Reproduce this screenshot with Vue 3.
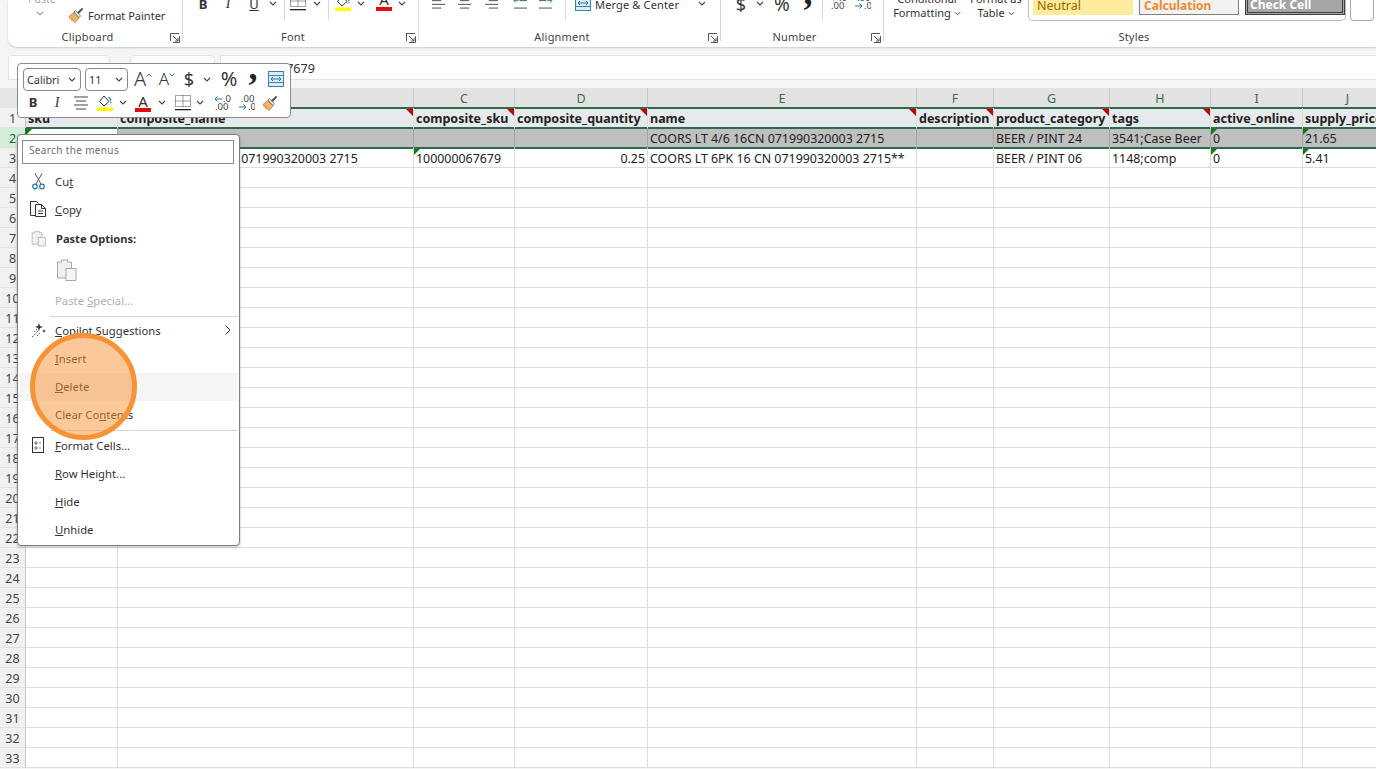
<script setup>
const cols = [
  { l: 'A', w: 92 }, { l: 'B', w: 296 }, { l: 'C', w: 101 }, { l: 'D', w: 133 }, { l: 'E', w: 269 },
  { l: 'F', w: 77 }, { l: 'G', w: 116 }, { l: 'H', w: 101 }, { l: 'I', w: 92 }, { l: 'J', w: 90 }
]
const gridCols = '26px ' + cols.map(c => c.w + 'px').join(' ')
const data = {
  1: ['sku', 'composite_name', 'composite_sku', 'composite_quantity', 'name', 'description', 'product_category', 'tags', 'active_online', 'supply_price'],
  2: ['', '', '', '', 'COORS LT 4/6 16CN 071990320003 2715', '', 'BEER / PINT 24', '3541;Case Beer', '0', '21.65'],
  3: ['', 'COORS LT 6PK 16CN 071990320003 2715', '100000067679', '0.25', 'COORS LT 6PK 16 CN 071990320003 2715**', '', 'BEER / PINT 06', '1148;comp', '0', '5.41']
}
const rows = Array.from({ length: 33 }, (_, i) => i + 1)
const cell = (r, c) => (data[r] ? data[r][c] : '')
const redMark = (r, c) => r === 1 && c >= 1 && c <= 7
const greenMark = (r, c) => (r === 2 && (c === 0 || c === 8 || c === 9)) || (r === 3 && (c === 2 || c === 8 || c === 9))
</script>

<template>
  <div class="page">
    <svg class="defs" aria-hidden="true">
      <symbol id="chev" viewBox="0 0 8 5"><path d="M1 1l3 3 3-3" fill="none" stroke="#444" stroke-width="1.1" /></symbol>
      <symbol id="launch" viewBox="0 0 10 10"><path d="M.5 8V.5H9M9.5 3v6.500H3M3 3l5 5M5 8h3V5" fill="none" stroke="#555" /></symbol>
      <symbol id="painter" viewBox="0 0 16 16">
        <path d="M1 9.500L6 5.500 11 11 7 15.500 5.500 14 5 13 3.500 13.500 4 11.500 2.500 12Z" fill="#f2b06a" stroke="#c9782b" stroke-width=".8" />
        <path d="M6 5l1.500-1.500L12.500 9 11 10.500Z" fill="#fff" stroke="#555" stroke-width=".8" />
        <path d="M9 5.500L14 .8 15.300 2 10.800 7Z" fill="#555" />
      </symbol>
      <symbol id="fill" viewBox="0 0 16 16">
        <path d="M7 1l5 5.500L7 11 2.500 6.500Z" fill="#fff" stroke="#333" />
        <path d="M11 2.500c2 .5 2.800 2 2.800 3.500" fill="none" stroke="#1f78b4" stroke-width="1.200" />
        <path d="M13.800 6.500l-1 1.800h2Z" fill="#1f78b4" />
        <rect x="0" y="12.500" width="16" height="3.500" fill="#ffff00" />
      </symbol>
      <symbol id="borders" viewBox="0 0 16 16">
        <path d="M.5.500h15v11H.5ZM8 .5v11M.5 6h15" fill="none" stroke="#444" stroke-dasharray="1 1" />
        <rect x="0" y="14" width="16" height="1.300" fill="#222" />
      </symbol>
      <symbol id="lines" viewBox="0 0 16 14"><path d="M1 1h14M3 5h10M1 9h14M3 13h10" stroke="#444" fill="none" /></symbol>
      <symbol id="left" viewBox="0 0 16 14"><path d="M1 1h14M1 5h10M1 9h14M1 13h10" stroke="#444" fill="none" /></symbol>
      <symbol id="right" viewBox="0 0 16 14"><path d="M1 1h14M5 5h10M1 9h14M5 13h10" stroke="#444" fill="none" /></symbol>
      <symbol id="outdent" viewBox="0 0 16 14"><path d="M7 1h8M7 5h8M1 13h14" stroke="#444" fill="none" /><path d="M1 5h5M3 3L1 5l2 2" stroke="#1f78b4" fill="none" /></symbol>
      <symbol id="indent" viewBox="0 0 16 14"><path d="M1 1h8M1 5h8M1 13h14" stroke="#444" fill="none" /><path d="M10 5h5M13 3l2 2-2 2" stroke="#1f78b4" fill="none" /></symbol>
      <symbol id="merge" viewBox="0 0 16 16">
        <rect x=".5" y=".5" width="15" height="15" fill="#d9ecf8" stroke="#3f7fa8" />
        <path d="M.5 4.500h15M.5 11.500h15" stroke="#3f7fa8" />
        <path d="M3 8h10M5 6L3 8l2 2M11 6l2 2-2 2" fill="none" stroke="#1f78b4" />
      </symbol>
      <symbol id="clipgrey" viewBox="0 0 20 24">
        <path d="M1 4h4V2h6v2h4v16H1Z" fill="#f0f0f0" stroke="#a8a8a8" />
        <rect x="9.500" y="10.500" width="10" height="12" fill="#f4f4f4" stroke="#a8a8a8" />
      </symbol>
    </svg>

    <header class="ribbon">
      <section class="group g-clip">
        <div class="tools clip-tools">
          <div class="paste-col"><span class="paste-word">Paste</span><svg class="chev"><use href="#chev" /></svg></div>
          <div class="painter-row"><svg class="ic16"><use href="#painter" /></svg><span>Format Painter</span></div>
        </div>
        <footer class="glabel">Clipboard<svg class="launch"><use href="#launch" /></svg></footer>
      </section>

      <section class="group g-font">
        <div class="tools row8 font-tools">
          <b class="ltr">B</b><i class="ltr it">I</i><u class="ltr">U</u>
          <svg class="chev"><use href="#chev" /></svg><span class="vsep"></span>
          <svg class="ic16"><use href="#borders" /></svg><svg class="chev"><use href="#chev" /></svg><span class="vsep"></span>
          <svg class="ic16"><use href="#fill" /></svg><svg class="chev"><use href="#chev" /></svg>
          <span class="color-a">A</span><svg class="chev"><use href="#chev" /></svg>
        </div>
        <footer class="glabel">Font<svg class="launch"><use href="#launch" /></svg></footer>
      </section>

      <section class="group g-align">
        <div class="tools row8 align-tools">
          <svg class="ic14"><use href="#left" /></svg><svg class="ic14"><use href="#lines" /></svg><svg class="ic14"><use href="#right" /></svg>
          <span></span>
          <svg class="ic14"><use href="#outdent" /></svg><svg class="ic14"><use href="#indent" /></svg>
          <span class="vsep"></span>
          <svg class="ic16"><use href="#merge" /></svg><span class="merge-text">Merge &amp; Center</span>
          <svg class="chev"><use href="#chev" /></svg>
        </div>
        <footer class="glabel">Alignment<svg class="launch"><use href="#launch" /></svg></footer>
      </section>

      <section class="group g-num">
        <div class="tools row8 num-tools">
          <span class="ltr big">$</span><svg class="chev"><use href="#chev" /></svg>
          <span class="ltr big pct">%</span><span class="comma">,</span><span class="vsep"></span>
          <svg class="ic-dec" viewBox="0 0 17 16"><path d="M1 4h7M3.500 1.500L1 4l2.500 2.500" fill="none" stroke="#1f78b4" /><text x="9" y="7" class="svgt">.0</text><text x="1" y="15" class="svgt">.00</text></svg>
          <svg class="ic-dec" viewBox="0 0 17 16"><text x="3" y="7" class="svgt">.00</text><path d="M1 12h7M5.500 9.500L8 12l-2.500 2.500" fill="none" stroke="#1f78b4" /><text x="10" y="15" class="svgt">.0</text></svg>
        </div>
        <footer class="glabel">Number<svg class="launch"><use href="#launch" /></svg></footer>
      </section>

      <section class="group g-styles">
        <div class="tools styles-tools">
          <div class="stack s-cond"><span>Conditional</span><span>Formatting <svg class="chev"><use href="#chev" /></svg></span></div>
          <div class="stack s-table"><span>Format as</span><span>Table <svg class="chev"><use href="#chev" /></svg></span></div>
          <div class="gallery">
            <span class="sty neutral">Neutral</span>
            <span class="sty calc">Calculation</span>
            <span class="sty check">Check Cell</span>
          </div>
          <span class="more"></span>
        </div>
        <footer class="glabel center-label">Styles</footer>
      </section>
    </header>

    <div class="fbar">
      <div class="fbox namebox"></div>
      <div class="fbox fxbox"></div>
      <div class="fbox formula">100000067679</div>
    </div>

    <div class="sheet" :style="{ gridTemplateColumns: gridCols }">
      <div class="corner"></div>
      <div v-for="c in cols" :key="c.l" class="colhead">{{ c.l }}</div>
      <template v-for="r in rows" :key="r">
        <div class="rowhead" :class="{ sel: r === 2 }">{{ r }}</div>
        <div
          v-for="(c, ci) in cols"
          :key="c.l"
          class="cell"
          :class="['r' + Math.min(r, 4), { num: r === 3 && ci === 3, active: r === 2 && ci === 0 }]"
        >
          <span class="txt">{{ cell(r, ci) }}</span>
          <i v-if="redMark(r, ci)" class="mark red"></i>
          <i v-if="greenMark(r, ci)" class="mark green"></i>
        </div>
      </template>
    </div>

    <div class="mini">
      <div class="mini-row m1">
        <div class="sel-box fontbox">Calibri<svg class="chev"><use href="#chev" /></svg></div>
        <div class="sel-box sizebox">11<svg class="chev"><use href="#chev" /></svg></div>
        <span class="slot aa a-up">A<svg viewBox="0 0 6 4"><path d="M.5 3.500L3 1l2.500 2.500" fill="none" stroke="#1f78b4" /></svg></span>
        <span class="slot aa a-down">A<svg viewBox="0 0 6 4"><path d="M.5.500L3 3 5.500.5" fill="none" stroke="#1f78b4" /></svg></span>
        <span class="slot ltr big">$</span>
        <span class="slot"><svg class="chev"><use href="#chev" /></svg></span>
        <span class="slot ltr pct2">%</span>
        <span class="slot comma2">,</span>
        <span class="slot"><svg class="ic16"><use href="#merge" /></svg></span>
      </div>
      <div class="mini-row m2">
        <b class="slot ltr">B</b>
        <i class="slot ltr it">I</i>
        <span class="slot"><svg class="ic16"><use href="#lines" /></svg></span>
        <span class="slot"><svg class="ic16"><use href="#fill" /></svg></span>
        <span class="slot"><svg class="chev"><use href="#chev" /></svg></span>
        <span class="slot color-a">A</span>
        <span class="slot"><svg class="chev"><use href="#chev" /></svg></span>
        <span class="slot"><svg class="ic16"><use href="#borders" /></svg></span>
        <span class="slot"><svg class="chev"><use href="#chev" /></svg></span>
        <span class="slot"><svg class="ic-dec" viewBox="0 0 17 16"><path d="M1 4h7M3.500 1.500L1 4l2.500 2.500" fill="none" stroke="#1f78b4" /><text x="9" y="7" class="svgt">.0</text><text x="1" y="15" class="svgt">.00</text></svg></span>
        <span class="slot"><svg class="ic-dec" viewBox="0 0 17 16"><text x="3" y="7" class="svgt">.00</text><path d="M1 12h7M5.500 9.500L8 12l-2.500 2.500" fill="none" stroke="#1f78b4" /><text x="10" y="15" class="svgt">.0</text></svg></span>
        <span class="slot"><svg class="ic16"><use href="#painter" /></svg></span>
      </div>
    </div>

    <nav class="menu">
      <div class="search">Search the menus</div>
      <div class="item">
        <span class="mi"><svg width="13" height="17" viewBox="0 0 13 17"><path d="M3 .5l6 10.500M10 .5L4 11" fill="none" stroke="#555" /><circle cx="3" cy="13.500" r="2.300" fill="none" stroke="#1f78b4" stroke-width="1.200" /><circle cx="10" cy="13.500" r="2.300" fill="none" stroke="#1f78b4" stroke-width="1.200" /></svg></span>
        <span>Cu<u>t</u></span>
      </div>
      <div class="item">
        <span class="mi"><svg width="17" height="16" viewBox="0 0 17 16"><path d="M5 14.500H.5V.5h6l2 2" fill="none" stroke="#333" /><path d="M5.500 3.500h6l4 4v8h-10Z" fill="#fff" stroke="#333" /><path d="M11.500 3.500v4h4M8 10h5M8 12.500h5" fill="none" stroke="#333" /></svg></span>
        <span><u>C</u>opy</span>
      </div>
      <div class="item head">
        <span class="mi"><svg width="15" height="17"><use href="#clipgrey" /></svg></span>
        <b>Paste Options:</b>
      </div>
      <div class="pasterow"><svg width="21" height="24"><use href="#clipgrey" /></svg></div>
      <div class="item dis"><span class="mi"></span><span>Paste <u>S</u>pecial...</span></div>
      <hr />
      <div class="item">
        <span class="mi"><svg width="15" height="15" viewBox="0 0 15 15"><path d="M1 14L8 7M3 9l3-3M6 13l3-3" stroke="#555" stroke-dasharray="1.500 1" fill="none" /><path d="M8 0l1 3 3 1-3 1-1 3-1-3-3-1 3-1ZM13 6l.6 1.400L15 8l-1.400.6L13 10l-.6-1.400L11 8l1.400-.6Z" fill="#333" /></svg></span>
        <span class="grow"><u>C</u>opilot Suggestions</span>
        <svg class="sub" width="6" height="10" viewBox="0 0 6 10"><path d="M.5.5L5 5 .5 9.500" fill="none" stroke="#333" /></svg>
      </div>
      <div class="item"><span class="mi"></span><span><u>I</u>nsert</span></div>
      <div class="item hover"><span class="mi"></span><span><u>D</u>elete</span></div>
      <div class="item"><span class="mi"></span><span>Clear Co<u>n</u>tents</span></div>
      <hr class="hr2" />
      <div class="item">
        <span class="mi"><svg width="12" height="16" viewBox="0 0 12 16"><rect x=".5" y=".5" width="11" height="15" fill="none" stroke="#333" /><path d="M3 5h2v2H3ZM3 10h2v2H3ZM7 6h2M7 11h2" fill="none" stroke="#555" stroke-width=".8" /></svg></span>
        <span><u>F</u>ormat Cells...</span>
      </div>
      <div class="item"><span class="mi"></span><span><u>R</u>ow Height...</span></div>
      <div class="item"><span class="mi"></span><span><u>H</u>ide</span></div>
      <div class="item"><span class="mi"></span><span><u>U</u>nhide</span></div>
    </nav>

    <div class="spot"></div>
  </div>
</template>

<style>
html, body { margin: 0; background: #f5f5f5; }
</style>

<style scoped>
.page {
  position: relative;
  width: 1376px;
  height: 769px;
  overflow: hidden;
  background: #f5f5f5;
  font-family: "Noto Sans", "Open Sans", sans-serif;
  font-size: 11px;
  color: #333;
}
.defs { position: absolute; width: 0; height: 0; }
svg { display: block; flex: none; }
.chev { width: 8px; height: 5px; }
.ic16 { width: 16px; height: 16px; }
.ic14 { width: 15px; height: 13px; }
.ic-dec { width: 17px; height: 16px; }
.svgt { font: 9.500px "Noto Sans", sans-serif; fill: #444; }

/* ribbon */
.ribbon {
  display: flex;
  height: 47px;
  margin-left: 8px;
  background: #fff;
  border-radius: 0 0 0 9px;
  overflow: hidden;
  box-shadow: 0 1px 2px rgba(0, 0, 0, .18);
}
.group {
  display: flex;
  flex-direction: column;
  flex: none;
  position: relative;
}
.group::after {
  content: "";
  position: absolute;
  right: 0;
  top: 0;
  bottom: 6px;
  width: 1px;
  background: #d8d8d8;
}
.g-clip { width: 175px; }
.g-font { width: 236px; }
.g-align { width: 302px; }
.g-num { width: 163px; }
.g-styles { flex: 1; }
.g-styles::after { display: none; }
.tools { height: 28px; flex: none; }
.glabel {
  height: 19px;
  line-height: 18px;
  text-align: center;
  font-size: 11px;
  letter-spacing: .2px;
  color: #444;
  position: relative;
  padding: 0 16px 1px 0;
  box-sizing: border-box;
}
.launch { position: absolute; right: 3px; top: 5px; width: 10px; height: 10px; }
.clip-tools { display: flex; }
.paste-col {
  width: 60px;
  padding-left: 20px;
  box-sizing: border-box;
  display: flex;
  flex-direction: column;
  align-items: flex-start;
  margin-top: -8px;
}
.paste-word { color: #aaa; height: 17px; line-height: 14px; }
.paste-col .chev { margin-left: 8px; margin-top: 2px; opacity: .5; }
.painter-row {
  display: flex;
  align-items: center;
  gap: 4px;
  height: 16px;
  margin-top: 7px;
  font-size: 11px;
  color: #333;
}

.row8 {
  display: grid;
  height: 8px;
  grid-template-rows: 8px;
  margin-bottom: 20px;
  align-items: center;
  justify-items: center;
}
.row8 svg { transform: translateY(-1px); }
.font-tools { grid-template-columns: 20px 30px 22px 16px 6px 22px 16px 6px 24px 12px 34px 2px; padding-left: 10px; }
.align-tools { grid-template-columns: 26px 27px 26px 4px 24px 26px 14px 21px 102px 14px; padding-left: 6px; }
.align-tools .ic14 { transform: translateY(-2px); }
.merge-text { justify-self: start; margin-left: 2px; font-size: 11px; white-space: nowrap; letter-spacing: .15px; }
.num-tools { grid-template-columns: 26px 12px 32px 20px 8px 24px 24px; padding-left: 7px; }
.num-tools .ic-dec { transform: translateY(-2px); }
.vsep { width: 1px; height: 32px; background: #d8d8d8; }
.ltr { font-size: 13px; line-height: 1; color: #333; }
.it { font-family: "Liberation Serif", serif; font-size: 14px; }
.big { font-size: 18px; font-family: "Noto Sans", sans-serif; font-weight: 400; }
.pct { font-size: 19px; }
.comma { font: bold 36px/1 "Liberation Serif", serif; transform: translateY(-12px); color: #222; }
.color-a {
  display: inline-flex;
  justify-content: center;
  width: 16px;
  line-height: 15px;
  border-bottom: 4px solid #e00b0b;
  font-size: 15px;
  color: #333;
  box-sizing: content-box;
}
.font-tools .color-a { transform: translateY(-3px); }

.styles-tools { display: flex; height: 28px; }
.stack {
  display: flex;
  flex-direction: column;
  align-items: center;
  margin-top: -8px;
  line-height: 14px;
  font-size: 11px;
}
.stack span { display: inline-flex; align-items: center; gap: 3px; white-space: nowrap; }
.stack .chev { width: 7px; }
.s-cond { width: 86px; box-sizing: border-box; }
.s-table { width: 52px; }
.gallery {
  display: flex;
  gap: 6px;
  width: 318px;
  height: 21px;
  margin-left: 6px;
  padding: 0 0 0 4px;
  box-sizing: border-box;
  border: 1px solid #bcbcbc;
  border-top: 0;
  border-radius: 0 0 5px 5px;
}
.sty {
  width: 100px;
  height: 15px;
  box-sizing: border-box;
  font-size: 12.500px;
  line-height: 11px;
  padding-left: 4px;
  overflow: hidden;
  flex: none;
}
.neutral { background: #ffeb9c; color: #9c6500; }
.calc { background: #f2f2f2; color: #f08a30; font-weight: 700; font-size: 12px; border: 1px solid #7f7f7f; border-top: 0; }
.check { background: #a5a5a5; color: #fff; font-weight: 700; font-size: 12px; border: 3px double #3f3f3f; border-top: 0; padding-left: 2px; line-height: 10px; }
.more {
  width: 24px;
  height: 21px;
  margin-left: 4px;
  box-sizing: border-box;
  border: 1px solid #aaa;
  border-top: 0;
  border-radius: 0 0 4px 4px;
}
.center-label { padding: 0 0 1px 8px; }

/* formula bar */
.fbar {
  display: flex;
  gap: 5px;
  height: 25px;
  margin: 8px 0 8px 8px;
}
.fbox {
  box-sizing: border-box;
  background: #fff;
  border: 1px solid #e2e2e2;
  border-radius: 4px 4px 0 0;
}
.namebox { width: 102px; }
.fxbox { width: 85px; margin-left: 15px; }
.formula {
  flex: 1;
  border-radius: 0;
  border-right: 0;
  padding-left: 8px;
  line-height: 25px;
  font-size: 12.500px;
}

/* sheet */
.sheet {
  display: grid;
  grid-template-rows: 20px repeat(33, 20px);
  width: 1376px;
  overflow: hidden;
  background: #fff;
  font-family: "Noto Sans", sans-serif;
  font-size: 12.400px;
  color: #222;
}
.corner { background: #e6e6e6; border-right: 1px solid #cfcfcf; }
.colhead {
  background: #e2e2e2;
  border-right: 1px solid #c6c6c6;
  text-align: center;
  line-height: 22px;
  color: #3d6b4f;
  font-size: 12.500px;
}
.rowhead {
  background: #f1f1f1;
  border-right: 1px solid #c6c6c6;
  border-bottom: 1px solid #e0e0e0;
  box-sizing: border-box;
  text-align: center;
  line-height: 22px;
  font-size: 12.500px;
  color: #444;
  overflow: hidden;
}
.rowhead.sel { background: #d3eeda; color: #1f6b3c; }
.cell {
  position: relative;
  box-sizing: border-box;
  border-right: 1px solid #dcdcdc;
  border-bottom: 1px solid #dcdcdc;
  padding-left: 2px;
  line-height: 21px;
  white-space: nowrap;
  min-width: 0;
}
.cell.r1 {
  background: #e7eaec;
  font-weight: 700;
  font-size: 12.500px;
  box-shadow: inset 0 1px 0 #2f6b4a, 0 -1px 0 #2f6b4a, inset 0 -1px 0 #2f6b4a;
  border-bottom: 0;
}
.cell.r2 {
  background: #bfbfbf;
  border-right-color: #a6a6a6;
  box-shadow: inset 0 1px 0 #2f6b4a, inset 0 -1px 0 #2f6b4a;
  border-bottom: 0;
}
.cell.r2.active { background: #fff; box-shadow: inset 0 1px 0 #2f6b4a, inset 0 -1px 0 #2f6b4a, -1px 0 0 #2f6b4a; }
.cell.r3 { box-shadow: inset 0 1px 0 #2f6b4a; }
.cell.num { text-align: right; padding-right: 2px; }
.txt { position: relative; }
.mark { position: absolute; width: 0; height: 0; border-style: solid; }
.mark.red { right: 0; top: 1px; border-width: 0 7px 7px 0; border-color: transparent #c00000 transparent transparent; }
.mark.green { left: 0; top: 1px; border-width: 6px 6px 0 0; border-color: #107c10 transparent transparent transparent; }

/* mini toolbar */
.mini {
  position: absolute;
  left: 17px;
  top: 63px;
  width: 274px;
  height: 55px;
  box-sizing: border-box;
  background: #fff;
  border: 1px solid #8a8a8a;
  border-radius: 4px;
  padding: 3px 0 0 0;
}
.mini-row { display: grid; align-items: center; justify-items: center; }
.slot { display: flex; align-items: center; justify-content: center; }
.m1 {
  height: 24px;
  padding-left: 5px;
  grid-template-rows: 24px;
  grid-template-columns: 58px 47px 30px 18px 26px 10px 34px 14px 32px;
}
.m1 .sizebox { justify-self: end; width: 43px; }
.m2 {
  height: 23px;
  padding-left: 3px;
  grid-template-rows: 23px;
  grid-template-columns: 24px 24px 24px 24px 12px 28px 10px 31px 4px 40px 8px 40px;
}
.m2 .color-a { line-height: 14px; border-bottom-width: 4px; }
.sel-box {
  display: flex;
  align-items: center;
  justify-content: space-between;
  box-sizing: border-box;
  width: 58px;
  height: 23px;
  padding: 0 4px 0 3px;
  border: 1px solid #8a8a8a;
  border-radius: 4px;
  font-size: 10.800px;
  color: #333;
}
.aa { font-size: 20px; color: #333; align-items: flex-start; line-height: 24px; font-weight: 300; }
.aa svg { width: 6px; height: 4px; margin-top: 6px; }
.a-down { font-size: 17px; }
.pct2 { font-size: 20px; line-height: 1; color: #333; }
.comma2 { font: bold 36px/1 "Liberation Serif", serif; transform: translateY(-12px); color: #222; }

/* context menu */
.menu {
  position: absolute;
  left: 17px;
  top: 134px;
  width: 223px;
  height: 412px;
  box-sizing: border-box;
  background: #fff;
  border: 1px solid #7f7f7f;
  border-radius: 4px;
  box-shadow: 0 1px 3px rgba(0, 0, 0, .25);
  font-size: 11.300px;
  color: #333;
}
.search {
  box-sizing: border-box;
  height: 24px;
  margin: 5px 5px 4px 4px;
  padding-left: 6px;
  border: 1px solid #8a8a8a;
  line-height: 19px;
  font-size: 10px;
  letter-spacing: .35px;
  color: #6d6d6d;
}
.item {
  display: flex;
  align-items: center;
  height: 28px;
  padding: 0 8px 2px 0;
  box-sizing: border-box;
}
.item u { text-underline-offset: 1px; }
.mi {
  flex: none;
  display: flex;
  justify-content: center;
  width: 37px;
  box-sizing: border-box;
  padding-left: 3px;
}
.grow { flex: 1; }
.head { margin-top: 1px; }
.head b { font-size: 11.100px; margin-left: 1px; }
.hover { background: #f5f5f5; padding-top: 1px; margin: 0 1px; padding-bottom: 3px; }
.hover .mi { width: 36px; }
.dis { color: #b0b0b0; }
.pasterow { height: 34px; padding-left: 38px; box-sizing: border-box; display: flex; align-items: center; }
hr {
  border: 0;
  height: 1px;
  margin: 1px 1px 0 32px;
  background: #d4d4d4;
}
.hr2 { margin: 1px 1px 1px 32px; }

/* highlight */
.spot {
  position: absolute;
  left: 30px;
  top: 333px;
  width: 107px;
  height: 107px;
  box-sizing: border-box;
  border: 5px solid #f79235;
  border-radius: 50%;
  background: rgba(247, 146, 53, .5);
}
</style>
